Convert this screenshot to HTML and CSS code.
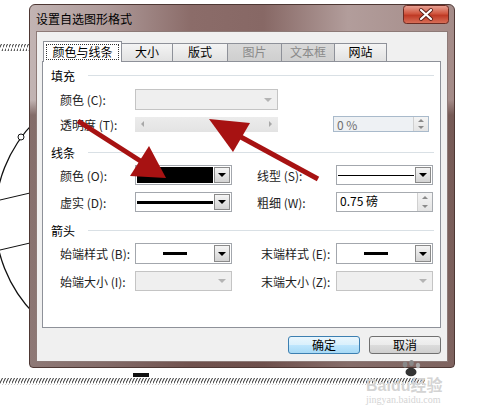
FILE: index.html
```html
<!DOCTYPE html>
<html lang="zh-CN">
<head>
  <meta charset="UTF-8" />
  <title>设置自选图形格式</title>
  <link rel="stylesheet" href="styles.css">
</head>
<body>
<div class="page">

  <!-- drawing behind the dialog -->
  <svg class="backdrop" width="484" height="415" viewBox="0 0 484 415">
    <defs>
      <pattern id="hatch" patternUnits="userSpaceOnUse" width="3" height="8">
        <line x1="-1" y1="9" x2="4" y2="-1" stroke="#111" stroke-width="0.9"/>
      </pattern>
    </defs>
    <rect x="0" y="44" width="30" height="7" fill="url(#hatch)"/>
    <rect x="0" y="378" width="425" height="7" fill="url(#hatch)"/>
    <circle cx="132" cy="218" r="137" fill="none" stroke="#111" stroke-width="1.3"/>
    <circle cx="21" cy="137" r="3" fill="#fff" stroke="#111" stroke-width="1"/>
    <line x1="0" y1="200" x2="30" y2="193" stroke="#111" stroke-width="1"/>
    <line x1="0" y1="250" x2="30" y2="243" stroke="#111" stroke-width="1"/>
    <rect x="133" y="373" width="16" height="4" fill="#111"/>
  </svg>

  <div class="dialog">
    <div class="titlebar">
      <span class="title">设置自选图形格式</span>
      <span class="close">
        <svg width="46" height="19" viewBox="0 0 46 19">
          <defs>
            <linearGradient id="red" x1="0" y1="0" x2="0" y2="1">
              <stop offset="0" stop-color="#e9a598"/>
              <stop offset="0.45" stop-color="#d0563f"/>
              <stop offset="0.55" stop-color="#bf3a25"/>
              <stop offset="1" stop-color="#d9715a"/>
            </linearGradient>
          </defs>
          <rect x="0.5" y="0.5" width="45" height="18" rx="3" fill="url(#red)" stroke="#6b2b22"/>
          <path d="M18 5 L28 14 M28 5 L18 14" stroke="#5a2018" stroke-width="4" stroke-linecap="round"/>
          <path d="M18 5 L28 14 M28 5 L18 14" stroke="#fff" stroke-width="2.2" stroke-linecap="round"/>
        </svg>
      </span>
    </div>

    <div class="client">
      <div class="tabs">
        <div class="tab active" style="width:79px"><span class="focus">颜色与线条</span></div>
        <div class="tab" style="width:51px">大小</div>
        <div class="tab" style="width:55px">版式</div>
        <div class="tab off" style="width:54px">图片</div>
        <div class="tab off" style="width:53px">文本框</div>
        <div class="tab" style="width:52px">网站</div>
      </div>

      <div class="panel">
        <div class="group g1"><span>填充</span></div>
        <div class="row r1">
          <span class="label">颜色 (<u>C</u>):</span>
          <div class="combo disabled wide"><span class="value"></span><span class="drop"></span></div>
        </div>
        <div class="row r2">
          <span class="label">透明度 (<u>T</u>):</span>
          <div class="slider"><span class="arr-l"></span><span class="arr-r"></span></div>
          <div class="spin spin-off"><span class="value">0 %</span><span class="spin-btns"><i class="up"></i><i class="down"></i></span></div>
        </div>

        <div class="group g2"><span>线条</span></div>
        <div class="row r3">
          <span class="label">颜色 (<u>O</u>):</span>
          <div class="combo narrow"><span class="value black"></span><span class="drop"></span></div>
          <span class="label2">线型 (<u>S</u>):</span>
          <div class="combo right"><span class="value"><i class="thin"></i></span><span class="drop"></span></div>
        </div>
        <div class="row r4">
          <span class="label">虚实 (<u>D</u>):</span>
          <div class="combo narrow"><span class="value"><i class="thick"></i></span><span class="drop"></span></div>
          <span class="label2">粗细 (<u>W</u>):</span>
          <div class="spin right"><span class="value">0.75 磅</span><span class="spin-btns"><i class="up"></i><i class="down"></i></span></div>
        </div>

        <div class="group g3"><span>箭头</span></div>
        <div class="row r5">
          <span class="label">始端样式 (<u>B</u>):</span>
          <div class="combo narrow"><span class="value"><i class="dash"></i></span><span class="drop"></span></div>
          <span class="label2 shift">末端样式 (<u>E</u>):</span>
          <div class="combo right"><span class="value"><i class="dash"></i></span><span class="drop"></span></div>
        </div>
        <div class="row r6">
          <span class="label">始端大小 (<u>I</u>):</span>
          <div class="combo disabled narrow"><span class="value"></span><span class="drop"></span></div>
          <span class="label2 shift">末端大小 (<u>Z</u>):</span>
          <div class="combo disabled right"><span class="value"></span><span class="drop"></span></div>
        </div>
      </div>

      <div class="buttons">
        <button class="btn default">确定</button>
        <button class="btn">取消</button>
      </div>
    </div>
  </div>

  <!-- watermark -->
  <div class="watermark">
    <svg class="paw" width="24" height="17" viewBox="0 0 24 17">
      <ellipse cx="5" cy="4.5" rx="2.3" ry="3" fill="#888"/>
      <ellipse cx="11.5" cy="3" rx="2.3" ry="2.9" fill="#888"/>
      <ellipse cx="18" cy="5.5" rx="2.1" ry="2.7" fill="#aaa"/>
      <ellipse cx="11" cy="12" rx="5.5" ry="4.3" fill="#333"/>
    </svg>
    <div class="wm-main">Baidu经验</div>
    <div class="wm-sub">jingyan.baidu.com</div>
  </div>

  <!-- red arrows over the dialog -->
  <svg class="arrows" width="484" height="415" viewBox="0 0 484 415">
    <line x1="78" y1="121" x2="142" y2="162" stroke="#a71212" stroke-width="5"/>
    <polygon points="166,178 149,146 130,176" fill="#a71212"/>
    <line x1="318" y1="179" x2="239" y2="136" stroke="#a71212" stroke-width="5"/>
    <polygon points="209,119 250,123 233,152" fill="#a71212"/>
  </svg>
</div>
</body>
</html>
```

FILE: styles.css
```css
body {
  margin: 0;
  background: #fff;
  font-family: "Noto Sans CJK SC", "DejaVu Sans", sans-serif;
  font-size: 12px;
  color: #000;
}

.page {
  position: relative;
  width: 484px;
  height: 415px;
  overflow: hidden;
}

.backdrop, .arrows {
  position: absolute;
  left: 0;
  top: 0;
}

.arrows {
  pointer-events: none;
  z-index: 3;
}

/* Dialog frame */
.dialog {
  position: relative;
  z-index: 1;
  margin: 4px 0 0 29px;
  width: 426px;
  height: 364px;
  box-sizing: border-box;
  border: 1px solid #4e3834;
  border-radius: 6px 6px 4px 4px;
  padding: 0 6px 5px 6px;
  display: flex;
  flex-direction: column;
  background:
    linear-gradient(to bottom, rgba(0,0,0,0) 95px, rgba(80,50,45,0.55) 110px, rgba(80,50,45,0.45) 100%),
    linear-gradient(to right, #c2b4b3 0%, #ae9a99 18%, #8b6c69 38%, #876865 55%, #b29d9b 75%, #a48b88 100%);
}

.titlebar {
  height: 26px;
  display: flex;
  justify-content: space-between;
}

.title {
  align-self: center;
  padding-top: 1px;
}

.close {
  height: 19px;
  margin-right: -1px;
}

.close svg {
  display: block;
}

.client {
  flex: 1;
  background: #f0f0f0;
  border: 1px solid #8d7a77;
  padding: 9px 6px 0 5px;
  display: flex;
  flex-direction: column;
}

/* Tabs */
.tabs {
  display: flex;
  height: 20px;
  padding-left: 1px;
}

.tab {
  box-sizing: border-box;
  height: 18px;
  margin-top: 2px;
  border: 1px solid #8e9199;
  border-bottom: none;
  background: linear-gradient(#f4f4f4, #e2e2e2);
  text-align: center;
  line-height: 16px;
}

.tab + .tab {
  border-left: none;
}

.tab.off {
  background: linear-gradient(#d9d9d9, #cfcfcf);
  color: #8a8a8a;
}

.tab.active {
  position: relative;
  z-index: 1;
  height: 21px;
  margin-top: 0;
  background: #fff;
  padding: 2px 2px 0;
  line-height: 14px;
}

.focus {
  display: block;
  border: 1px dotted #333;
  height: 14px;
}

.panel {
  height: 267px;
  box-sizing: border-box;
  background: #fff;
  border: 1px solid #8e9199;
}

/* group headers */
.group {
  display: flex;
  align-items: center;
  height: 16px;
  padding-left: 8px;
}

.group::after {
  content: "";
  flex: 1;
  height: 1px;
  background: #d9e0e5;
  margin: 0 6px 0 13px;
}

.g1 { margin-top: 5px; }
.g2 { margin-top: 12px; }
.g3 { margin-top: 10px; }

/* rows */
.row {
  display: flex;
  align-items: center;
  padding-left: 17px;
}

.r1 { height: 21px; margin-top: 6px; }
.r2 { height: 16px; margin-top: 6px; }
.r3 { height: 20px; margin-top: 5px; }
.r4 { height: 20px; margin-top: 7px; }
.r5 { height: 21px; margin-top: 5px; }
.r6 { height: 20px; margin-top: 7px; }

.label {
  width: 75px;
  white-space: nowrap;
  color: #222;
}

.label2 {
  width: 79px;
  margin-left: 25px;
  white-space: nowrap;
  color: #222;
}

.label2.shift {
  width: 75px;
  margin-left: 29px;
}

u {
  text-decoration: none;
}

/* combo boxes */
.combo {
  display: flex;
  height: 100%;
  box-sizing: border-box;
  border: 1px solid #a3a7ad;
  background: #fff;
  padding: 1px;
}

.combo.wide { width: 143px; }
.combo.narrow { width: 97px; }
.combo.right { width: 97px; }

.combo .value {
  flex: 1;
  display: flex;
  align-items: center;
  justify-content: center;
  margin-right: 1px;
}

.combo .value.black {
  background: #000;
}

.drop {
  width: 14px;
  border: 1px solid #8a8a8a;
  background: linear-gradient(#f5f5f5, #d3d3d3);
  display: flex;
  align-items: center;
  justify-content: center;
}

.drop::after {
  content: "";
  border-left: 4px solid transparent;
  border-right: 4px solid transparent;
  border-top: 4px solid #000;
}

.combo.disabled {
  background: #efefef;
  border-color: #c4c4c4;
}

.combo.disabled .drop {
  border-color: transparent;
  background: none;
}

.combo.disabled .drop::after {
  border-top-color: #b4b4b4;
}

.thin {
  display: block;
  width: 100%;
  height: 1px;
  background: #000;
}

.thick {
  display: block;
  width: 100%;
  height: 3px;
  background: #000;
}

.dash {
  display: block;
  width: 24px;
  height: 3px;
  background: #000;
}

/* slider */
.slider {
  width: 143px;
  height: 15px;
  background: linear-gradient(#ececec, #e3e3e3);
  display: flex;
  align-items: center;
  justify-content: space-between;
  padding: 0 6px;
  box-sizing: border-box;
}

.arr-l {
  border-top: 3px solid transparent;
  border-bottom: 3px solid transparent;
  border-right: 3px solid #a8a8a8;
}

.arr-r {
  border-top: 3px solid transparent;
  border-bottom: 3px solid transparent;
  border-left: 3px solid #a8a8a8;
}

/* spinners */
.spin {
  display: flex;
  height: 100%;
  box-sizing: border-box;
  border: 1px solid #a7abb0;
  background: #fff;
}

.spin.right { width: 97px; }

.spin-off {
  width: 96px;
  margin-left: 55px;
  background: #eef1f4;
  border-color: #a9bacb;
  color: #6f6f6f;
}

.spin .value {
  flex: 1;
  padding-left: 3px;
  line-height: 16px;
  white-space: nowrap;
}

.spin-btns {
  width: 14px;
  display: flex;
  flex-direction: column;
  border-left: 1px solid #d0d0d0;
  background: linear-gradient(#f4f4f4, #e4e4e4);
}

.spin-btns i {
  flex: 1;
  display: flex;
  align-items: center;
  justify-content: center;
}

.spin-btns .up::after {
  content: "";
  border-left: 3px solid transparent;
  border-right: 3px solid transparent;
  border-bottom: 3px solid #8a8a8a;
}

.spin-btns .down::after {
  content: "";
  border-left: 3px solid transparent;
  border-right: 3px solid transparent;
  border-top: 3px solid #8a8a8a;
}

/* buttons */
.buttons {
  display: flex;
  justify-content: flex-end;
  gap: 9px;
  margin-top: 8px;
}

.btn {
  width: 72px;
  height: 18px;
  padding: 0;
  font-family: inherit;
  font-size: 12px;
  line-height: 14px;
  color: #000;
  border: 1px solid #707070;
  border-radius: 3px;
  background: linear-gradient(#f3f3f3 0%, #ebebeb 50%, #dcdcdc 51%, #cfcfcf 100%);
}

.btn.default {
  border-color: #3c7fb1;
  background: linear-gradient(#eaf6fd 0%, #d9f0fc 50%, #bee6fd 51%, #a7d9f5 100%);
}

/* watermark */
.watermark {
  position: absolute;
  left: 366px;
  top: 360px;
  z-index: 2;
  color: #d4d4d4;
  width: 100px;
}

.paw {
  display: block;
  margin-left: 34px;
}

.wm-main {
  font-size: 16px;
  line-height: 17px;
  font-weight: bold;
  font-family: "Liberation Sans", "Noto Sans CJK SC", sans-serif;
}

.wm-sub {
  font-size: 10px;
  line-height: 12px;
  font-family: "Liberation Serif", serif;
}
```
